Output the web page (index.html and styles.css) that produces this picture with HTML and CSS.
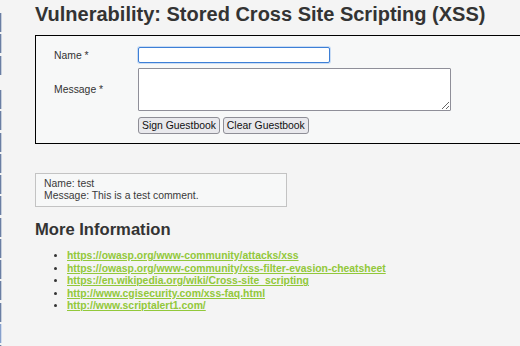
FILE: index.html
```html
<!DOCTYPE html>
<html lang="en">
<head>
<meta charset="utf-8">
<title>Vulnerability: Stored Cross Site Scripting (XSS)</title>
<link rel="stylesheet" href="styles.css">
</head>
<body>
<div class="page">
  <nav class="menu">
    <div class="group first">
      <span class="item"></span><span class="item"></span><span class="item"></span>
    </div>
    <div class="group second">
      <span class="item"></span><span class="item"></span><span class="item"></span>
      <span class="item"></span><span class="item"></span><span class="item"></span>
      <span class="item"></span><span class="item"></span><span class="item"></span>
      <span class="item"></span><span class="item"></span><span class="item selected"></span>
      <span class="item"></span>
    </div>
  </nav>
  <main class="main">
    <h1 class="title">Vulnerability: Stored Cross Site Scripting (XSS)</h1>
    <div class="vuln-box">
      <form class="guest-form" onsubmit="return false;">
        <label class="label" for="txtName">Name *</label>
        <div class="field"><input id="txtName" class="name-input" type="text" maxlength="10"></div>
        <label class="label" for="mtxMessage">Message *</label>
        <div class="field"><textarea id="mtxMessage" class="msg-input"></textarea></div>
        <span class="spacer"></span>
        <div class="buttons"><button class="btn" type="submit">Sign Guestbook</button> <button class="btn" type="button">Clear Guestbook</button></div>
      </form>
    </div>
    <div class="entry">Name: test<br>Message: This is a test comment.</div>
    <h2 class="more">More Information</h2>
    <ul class="links">
      <li><a href="#">https://owasp.org/www-community/attacks/xss</a></li>
      <li><a href="#">https://owasp.org/www-community/xss-filter-evasion-cheatsheet</a></li>
      <li><a href="#">https://en.wikipedia.org/wiki/Cross-site_scripting</a></li>
      <li><a href="#">http://www.cgisecurity.com/xss-faq.html</a></li>
      <li><a href="#">http://www.scriptalert1.com/</a></li>
    </ul>
  </main>
</div>
</body>
</html>
```

FILE: styles.css
```css
html, body {
  margin: 0;
  padding: 0;
  background: #f4f4f4;
  overflow: hidden;
}
body {
  font-family: "Liberation Sans", Arial, sans-serif;
  font-size: 10.4px;
  color: #333;
}
.page {
  display: flex;
  width: 520px;
  height: 346px;
  overflow: hidden;
}
.menu {
  width: 2px;
  flex: none;
  display: flex;
  flex-direction: column;
}
.group {
  display: flex;
  flex-direction: column;
  gap: 2.25px;
}
.group.first { margin-top: 13px; }
.group.second { margin-top: 15.5px; }
.item {
  display: block;
  height: 19px;
  width: 2px;
  background: linear-gradient(to right, #6a7ea3 50%, #c7cfdc 50%);
  flex: none;
}
.item.selected {
  background: linear-gradient(to right, #86a0cc 50%, #d3dcec 50%);
}
.main {
  flex: 1;
  padding-left: 33px;
  min-width: 0;
}
.title {
  margin: 3px 0 0;
  font-size: 20px;
  line-height: 23px;
  font-weight: bold;
  color: #333;
  white-space: nowrap;
}
.vuln-box {
  margin-top: 9px;
  width: 520px;
  border: 1px solid #000;
  background: #f7f8f8;
  padding: 11px 18px 9px;
}
.guest-form {
  display: grid;
  grid-template-columns: 84px auto;
  row-gap: 5px;
  align-items: center;
}
.label {
  color: #333;
}
.field {
  display: flex;
}
.name-input {
  box-sizing: border-box;
  width: 192px;
  height: 16px;
  margin: 0;
  padding: 0 2px;
  border: 1px solid #3d7fd6;
  border-radius: 2px;
  box-shadow: 0 0 0 1px #c9dcf4;
  background: #fff;
  font: inherit;
  outline: none;
}
.msg-input {
  box-sizing: border-box;
  width: 313px;
  height: 43px;
  margin: 0;
  padding: 2px;
  border: 1px solid #8f8f99;
  border-radius: 1px;
  background: #fff;
  font: inherit;
  resize: both;
}
.buttons {
  margin-top: 1px;
  white-space: nowrap;
}
.btn {
  box-sizing: border-box;
  height: 17px;
  margin: 0;
  padding: 0 3px;
  border: 1px solid #8e8e96;
  border-radius: 3px;
  background: #e9e9ed;
  color: #111;
  font-family: "Liberation Sans", Arial, sans-serif;
  font-size: 10.4px;
  line-height: 12px;
}
.entry {
  box-sizing: border-box;
  margin-top: 29px;
  width: 252px;
  height: 34px;
  padding: 4px 8px;
  border: 1px solid #c3c3c3;
  background: #f7f8f8;
  line-height: 12px;
  color: #3a3a3a;
}
.more {
  margin: 13px 0 0;
  font-size: 16.6px;
  line-height: 19px;
  font-weight: bold;
  color: #333;
}
.links {
  margin: 11px 0 0;
  padding-left: 32px;
  line-height: 12.6px;
}
.links li {
  color: #333;
}
.links a {
  color: #92c83a;
  font-weight: bold;
  text-decoration: underline;
}
```
